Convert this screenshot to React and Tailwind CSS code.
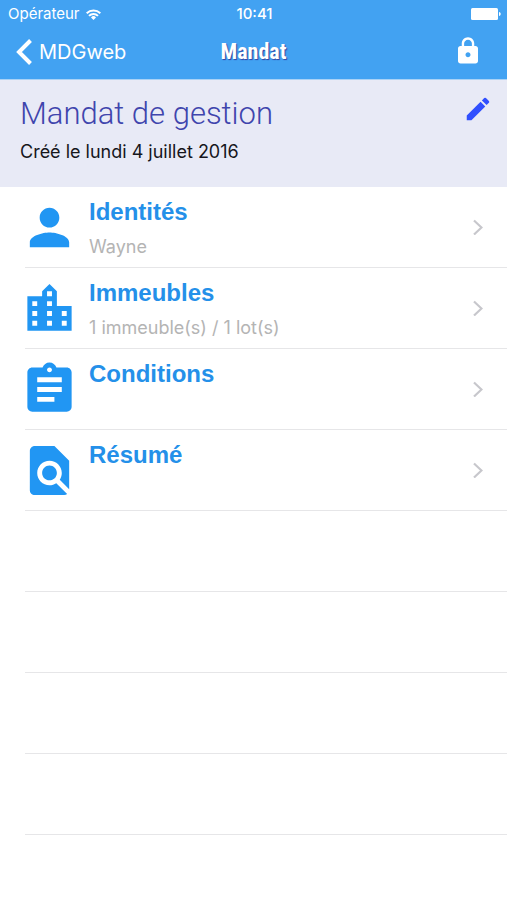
import React from 'react';
import { MdAssignment, MdEdit, MdFindInPage, MdLocationCity, MdLock, MdPerson } from 'react-icons/md';

const SECTIONS = [
  { id: 'identites', icon: MdPerson, label: 'Identités', detail: 'Wayne' },
  { id: 'immeubles', icon: MdLocationCity, label: 'Immeubles', detail: '1 immeuble(s) / 1 lot(s)' },
  { id: 'conditions', icon: MdAssignment, label: 'Conditions' },
  { id: 'resume', icon: MdFindInPage, label: 'Résumé' }
];

const EMPTY_ROWS = ['a', 'b', 'c', 'd'];

const WifiIcon = () => (
  <svg viewBox="0 0 15 11" className="h-[11px] w-[15px]" fill="none" stroke="currentColor" strokeWidth="2" aria-hidden="true">
    <path d="M0.7 4.2a9.7 9.7 0 0 1 13.6 0" />
    <path d="M3 6.9a6.4 6.4 0 0 1 9 0" />
    <path d="M5 8.4a3.5 3.5 0 0 1 5 0L7.5 11z" fill="currentColor" stroke="none" />
  </svg>
);

const BatteryIcon = () => (
  <svg viewBox="0 0 30 12" className="h-3 w-[30px]" fill="currentColor" aria-hidden="true">
    <rect x="0" y="0" width="27" height="12" rx="1.5" />
    <path d="M28 4c1.2 0.4 1.7 1.1 1.7 2s-0.5 1.6-1.7 2z" />
  </svg>
);

const StatusBar = () => (
  <div className="grid grid-cols-3 items-center h-7 pl-2 pr-[6px] text-[15px]">
    <div className="flex items-center gap-[6px]">
      <span>Opérateur</span>
      <WifiIcon />
    </div>
    <span className="text-center font-medium">10:41</span>
    <div className="flex justify-end">
      <BatteryIcon />
    </div>
  </div>
);

const SectionRow = ({ section }) => {
  const Icon = section.icon;
  return (
    <li className="h-[81px]">
      <button type="button" className="flex items-center w-full h-20 pl-5 pr-6 text-left">
        <Icon className="w-[59px] h-[59px] shrink-0 text-[#2196f3]" />
        <span className="flex flex-col grow self-stretch pl-[10px] pt-[7px]">
          <span className="text-2xl leading-9 font-bold text-[#2490e9] font-['Liberation_Sans',sans-serif]">{section.label}</span>
          {section.detail && <span className="text-lg leading-[34px] text-[#b4b4b4]">{section.detail}</span>}
        </span>
        <svg viewBox="0 0 10 16" className="w-[10px] h-4 shrink-0" fill="none" stroke="#c7c7cc" strokeWidth="2.2" aria-hidden="true">
          <path d="M1 1.5l7.5 7L1 15.5" />
        </svg>
      </button>
      <div className="h-px ml-[25px] bg-[#e6e6e8]" />
    </li>
  );
};

const App = () => {
  return (
    <div className="min-h-screen bg-white font-['Inter',sans-serif]">

      {/* Navigation bar */}
      <header className="bg-[#42a2f2] text-white border-b border-[#a9d2f6]">
        <StatusBar />
        <div className="grid grid-cols-3 items-start h-[51px] pl-4 pr-6 pt-2">
          <a href="#mdgweb" className="flex items-center gap-[7px] h-8 text-xl">
            <svg viewBox="0 0 16 26" className="w-4 h-[26px]" fill="none" stroke="currentColor" strokeWidth="4" aria-hidden="true">
              <path d="M14.5 1.5L3 13l11.5 11.5" />
            </svg>
            MDGweb
          </a>
          <h1 className="pl-2 text-center text-[22px] leading-8 font-bold font-['Roboto_Condensed','Roboto',sans-serif] [text-shadow:1px_1px_1px_#303f9f]">
            Mandat
          </h1>
          <button type="button" aria-label="Verrouiller" className="justify-self-end">
            <MdLock className="w-[30px] h-[30px]" />
          </button>
        </div>
      </header>

      {/* Mandate summary */}
      <section className="flex justify-between h-[107px] pl-5 pr-[14px] pt-[14px] bg-[#e8eaf6]">
        <div>
          <h2 className="text-[31px] leading-10 font-light text-[#3f45ad] font-['Roboto',sans-serif]">Mandat de gestion</h2>
          <p className="text-lg leading-9 text-[#16161c]">Créé le lundi 4 juillet 2016</p>
        </div>
        <button type="button" aria-label="Modifier" className="self-start">
          <MdEdit className="w-[30px] h-[30px] text-[#304ffe]" />
        </button>
      </section>

      {/* Sections */}
      <main>
        <ul>
          {SECTIONS.map(section => <SectionRow key={section.id} section={section} />)}
          {EMPTY_ROWS.map(row => (
            <li key={row} aria-hidden="true" className="h-[81px] ml-[25px] border-b border-[#e6e6e8]" />
          ))}
        </ul>
      </main>
    </div>
  );
};

export default App;
